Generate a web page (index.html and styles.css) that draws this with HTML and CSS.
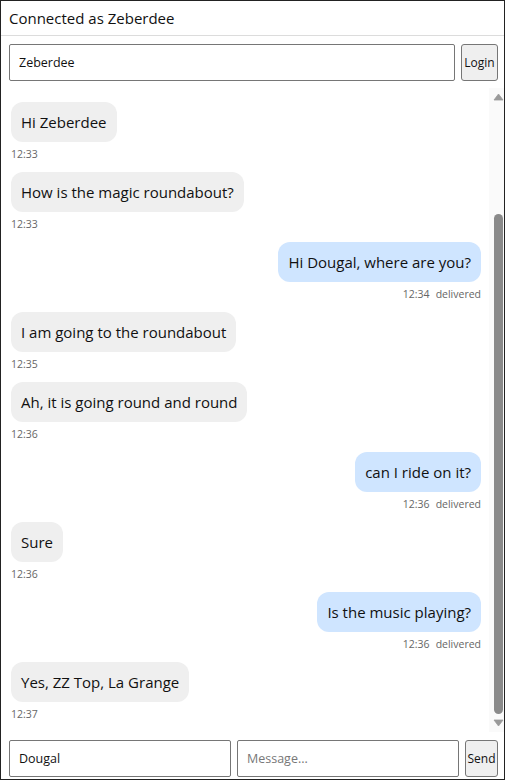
FILE: index.html
```html
<!DOCTYPE html>
<html lang="en">
<head>
<meta charset="utf-8">
<title>Chat</title>
<link rel="stylesheet" href="styles.css">
</head>
<body>
<div class="app">
  <header class="status">Connected as Zeberdee</header>
  <form class="row login-row">
    <input class="field grow" type="text" value="Zeberdee">
    <button class="btn btn-login" type="button">Login</button>
  </form>
  <div class="chat-body">
    <div class="viewport">
      <div class="msg in"><div class="bubble">Hi Zeberdee</div><div class="meta"><span>12:33</span></div></div>
      <div class="msg in"><div class="bubble">How is the magic roundabout?</div><div class="meta"><span>12:33</span></div></div>
      <div class="msg out"><div class="bubble">Hi Dougal, where are you?</div><div class="meta"><span>12:34</span><span>delivered</span></div></div>
      <div class="msg in"><div class="bubble">I am going to the roundabout</div><div class="meta"><span>12:35</span></div></div>
      <div class="msg in"><div class="bubble">Ah, it is going round and round</div><div class="meta"><span>12:36</span></div></div>
      <div class="msg out"><div class="bubble">can I ride on it?</div><div class="meta"><span>12:36</span><span>delivered</span></div></div>
      <div class="msg in"><div class="bubble">Sure</div><div class="meta"><span>12:36</span></div></div>
      <div class="msg out"><div class="bubble">Is the music playing?</div><div class="meta"><span>12:36</span><span>delivered</span></div></div>
      <div class="msg in"><div class="bubble">Yes, ZZ Top, La Grange</div><div class="meta"><span>12:37</span></div></div>
    </div>
    <div class="scrollbar" aria-hidden="true">
      <svg class="sb-btn" width="15" height="15" viewBox="0 0 15 15"><polygon points="5,12 14,12 9.5,6" fill="#9a9a9a" stroke="#9a9a9a" stroke-width="0.8" stroke-linejoin="round"/></svg>
      <div class="sb-track"><div class="sb-thumb" style="height: 500px"></div></div>
      <svg class="sb-btn" width="15" height="15" viewBox="0 0 15 15"><polygon points="5,3 14,3 9.5,9" fill="#9a9a9a" stroke="#9a9a9a" stroke-width="0.8" stroke-linejoin="round"/></svg>
    </div>
  </div>
  <form class="row compose-row">
    <input class="field grow" type="text" value="Dougal">
    <input class="field grow" type="text" placeholder="Message...">
    <button class="btn btn-send" type="button">Send</button>
  </form>
</div>
</body>
</html>
```

FILE: styles.css
```css
* { box-sizing: border-box; }
html, body { margin: 0; padding: 0; background: #fff; }
body {
  font-family: "Open Sans", "Noto Sans", sans-serif;
  color: #111;
}
.app {
  width: 505px;
  height: 780px;
  border: 1px solid #222;
  display: flex;
  flex-direction: column;
  overflow: hidden;
}
.status {
  height: 35px;
  flex: none;
  padding: 0 8px;
  border-bottom: 1px solid #dcdcdc;
  font-size: 15px;
  line-height: 34px;
  white-space: nowrap;
}
.row {
  display: flex;
  flex: none;
  margin: 0;
  padding: 8px 6px 7px 8px;
  gap: 6px;
}
.compose-row { padding: 8px 6px 2px 8px; }
.grow { flex: 1 1 0; min-width: 0; }
.field {
  height: 37px;
  border: 1px solid #767676;
  border-radius: 2px;
  padding: 0 9px;
  font-family: inherit;
  font-size: 12.5px;
  color: #111;
  background: #fff;
}
.field::placeholder { color: #777; }
.btn {
  flex: none;
  height: 37px;
  padding: 0;
  border: 1px solid #767676;
  border-radius: 3px;
  background: #efefef;
  font-family: inherit;
  font-size: 12px;
  color: #111;
  white-space: nowrap;
  text-align: center;
}
.btn-login { width: 37px; }
.btn-send { width: 33px; }
.chat-body {
  flex: 1 1 auto;
  min-height: 0;
  display: flex;
}
.viewport {
  flex: 1 1 auto;
  min-width: 0;
  overflow: hidden;
  display: flex;
  flex-direction: column;
  justify-content: flex-end;
  padding: 0 8px 0 10px;
}
.msg {
  flex: none;
  display: flex;
  flex-direction: column;
  align-items: flex-start;
}
.msg.out { align-items: flex-end; }
.bubble {
  padding: 10px;
  border-radius: 12px;
  background: #efefef;
  font-size: 15px;
  line-height: 20px;
  white-space: nowrap;
}
.msg.out .bubble { background: #cfe5ff; }
.meta {
  display: flex;
  gap: 6px;
  margin: 5px 0 10px;
  font-size: 10.5px;
  line-height: 15px;
  color: #666;
}
.scrollbar {
  flex: none;
  width: 15px;
  display: flex;
  flex-direction: column;
  background: #fafafa;
}
.sb-btn { display: block; flex: none; }
.sb-track {
  flex: 1 1 auto;
  display: flex;
  flex-direction: column;
  justify-content: flex-end;
  padding: 0 1px 3px 5px;
}
.sb-thumb {
  flex: none;
  width: 9px;
  border-radius: 5px;
  background: #8a8a8a;
}
```
